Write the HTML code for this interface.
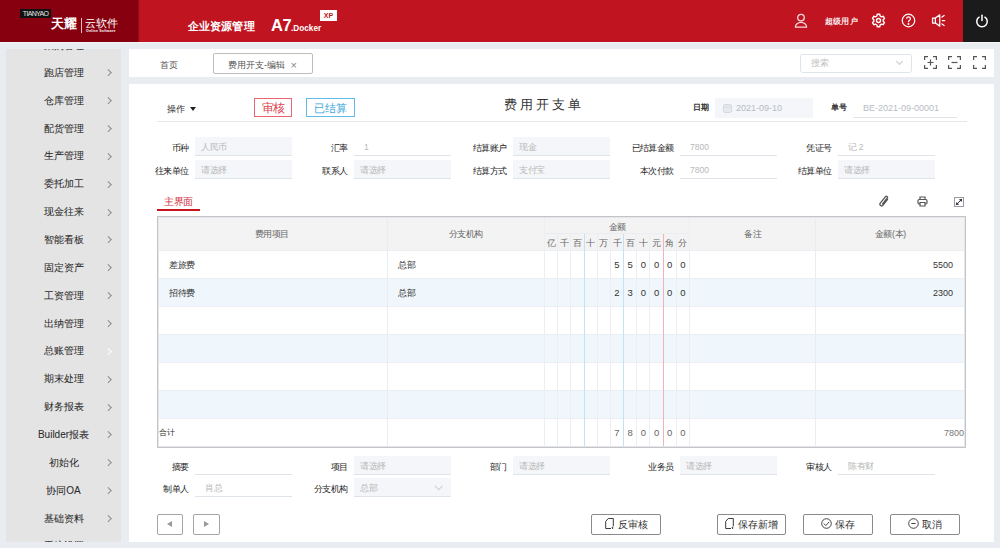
<!DOCTYPE html>
<html><head><meta charset="utf-8">
<style>
*{box-sizing:border-box;margin:0;padding:0}
html,body{width:1000px;height:548px;overflow:hidden;background:#e9edf1;font-family:"Liberation Sans",sans-serif;color:#333}
.a{position:absolute}
#hdr{left:0;top:0;width:1000px;height:42px;background:#c01420}
#logo{left:0;top:0;width:138px;height:42px;background:#870010;box-shadow:1px 0 1px rgba(80,0,0,.35)}
#pwr{left:963px;top:0;width:37px;height:42px;background:#1b1b1b}
#side{left:6px;top:49px;width:115px;height:493px;background:#e4e4e4;overflow:hidden}
.mi{position:absolute;left:0;width:115px;height:28px;font-size:10px;line-height:28px;color:#2a2a2a;-webkit-text-stroke:0.05px #2a2a2a}
.mi .t{position:absolute;left:27.5px;width:60px;text-align:center;white-space:nowrap}
.mi .c{position:absolute;left:100px;top:11.5px;width:4.5px;height:4.5px;border-right:1px solid #999;border-top:1px solid #999;transform:rotate(45deg)}
#tabbar{left:129px;top:49px;width:865px;height:28px;background:#fff}
#main{left:129px;top:84px;width:865px;height:458px;background:#fff}
.lbl{position:absolute;font-size:9px;line-height:22px;height:19px;text-align:right;color:#1e1e1e;white-space:nowrap}
.inp{position:absolute;width:97px;height:19px;font-size:8.5px;line-height:20px;padding-left:6px;color:#b8b8b8;border-bottom:1px solid #dfe3ea;white-space:nowrap}
.inp{padding-left:10px}
.inp.f{background:#f4f6f9;padding-left:6px}
.btn{position:absolute;height:21px;border:1px solid #8a8a8a;border-radius:2px;background:#fff;font-size:10px;line-height:19px;color:#333;text-align:center;white-space:nowrap}
z{display:inline-block;width:1em;text-align:center;font-style:normal}
.ttl z{width:calc(1em + 3.5px);text-align:left}
.lbl z{width:8.4px}
</style></head><body>
<div id="hdr" class="a"></div><div id="logo" class="a"></div><div id="pwr" class="a"></div><div class="a" style="left:0;top:42px;width:1000px;height:1px;background:#f2f8fa"></div>
<div class="a" style="left:20px;top:9px;width:31px;height:9px;background:#111;color:#e8e8e8;font-size:7px;line-height:9px;letter-spacing:-0.7px;text-align:center">TIANYAO</div>
<div class="a" style="left:51px;top:17px;font-size:12.5px;line-height:15px;color:#fff;font-weight:bold;white-space:nowrap"><z>天</z><z>耀</z></div>
<div class="a" style="left:81px;top:18px;width:1px;height:15px;background:#e8c0c4"></div>
<div class="a" style="left:85px;top:15.5px;font-size:11px;line-height:14px;color:#fff;white-space:nowrap"><z>云</z><z>软</z><z>件</z></div>
<div class="a" style="left:86px;top:30px;width:32px;font-size:3.5px;line-height:3px;color:#fff;white-space:nowrap;font-weight:bold;letter-spacing:0.2px">Online Software</div>
<div class="a" style="left:187.5px;top:18.5px;font-size:11.2px;line-height:14px;color:#fff;font-weight:bold;white-space:nowrap"><z>企</z><z>业</z><z>资</z><z>源</z><z>管</z><z>理</z></div>
<div class="a" style="left:271px;top:16px;font-size:16.5px;line-height:18px;color:#fff;font-weight:bold;white-space:nowrap;letter-spacing:-0.5px">A7<span style="font-size:8.2px;letter-spacing:0">.Docker</span></div>
<div class="a" style="left:320px;top:10px;width:17px;height:11px;background:#fff;color:#c01420;font-size:7px;line-height:11px;font-weight:bold;text-align:center">XP</div>
<svg class="a" style="left:793px;top:13px" width="16" height="16" viewBox="0 0 16 16" fill="none" stroke="#f6dadc" stroke-width="1.3"><circle cx="8" cy="4.6" r="3.3"/><path d="M2.4 14.2a5.6 4.9 0 0 1 11.2 0z" stroke-linejoin="round"/></svg>
<div class="a" style="left:825px;top:16.3px;font-size:8.2px;line-height:12px;color:#fff;-webkit-text-stroke:0.2px #fff;white-space:nowrap"><z>超</z><z>级</z><z>用</z><z>户</z></div>
<svg class="a" style="left:871px;top:12.5px" width="15" height="15" viewBox="0 0 24 24" fill="none" stroke="#fff" stroke-width="2.2" stroke-linejoin="round"><path d="M10 2h4l.6 2.8 2.3 1.3 2.7-.9 2 3.5-2.1 1.9v2.7l2.1 1.9-2 3.5-2.7-.9-2.300 1.3L14 22h-4l-.6-2.8-2.3-1.3-2.7.9-2-3.5 2.1-1.9v-2.7L2.4 8.7l2-3.5 2.7.9 2.3-1.3z"/><circle cx="12" cy="12" r="3.2"/></svg>
<svg class="a" style="left:901px;top:12.5px" width="15" height="15" viewBox="0 0 24 24" fill="none" stroke="#fff" stroke-width="2"><circle cx="12" cy="12" r="10"/><path d="M9 9.2a3 3 0 1 1 4.2 2.8c-.8.4-1.2 1-1.2 1.9v1"/><circle cx="12" cy="17.6" r="0.6" fill="#fff"/></svg>
<svg class="a" style="left:931px;top:12.5px" width="15" height="15" viewBox="0 0 24 24" fill="none" stroke="#fff" stroke-width="2" stroke-linejoin="round" stroke-linecap="round"><path d="M2.5 8h4.5l7-5v18l-7-5H2.5z"/><path d="M7 8v8"/><path d="M17.5 6.5l3.5-2.5M18 12h4M17.5 17.5l3.5 2.5"/></svg>
<svg class="a" style="left:975px;top:13.5px" width="14" height="14" viewBox="0 0 24 24" fill="none" stroke="#fff" stroke-width="2.6" stroke-linecap="round"><path d="M7 5.5a9 9 0 1 0 10 0"/><path d="M12 2v9"/></svg>
<div id="side" class="a"><div class="mi" style="top:-16.56px"><span class="t"><z>采</z><z>购</z><z>管</z><z>理</z></span></div><div class="mi" style="top:9.80px"><span class="t"><z>跑</z><z>店</z><z>管</z><z>理</z></span><span class="c" style="border-color:#8a8a8a"></span></div><div class="mi" style="top:37.66px"><span class="t"><z>仓</z><z>库</z><z>管</z><z>理</z></span><span class="c" style="border-color:#8a8a8a"></span></div><div class="mi" style="top:65.52px"><span class="t"><z>配</z><z>货</z><z>管</z><z>理</z></span><span class="c" style="border-color:#8a8a8a"></span></div><div class="mi" style="top:93.38px"><span class="t"><z>生</z><z>产</z><z>管</z><z>理</z></span><span class="c" style="border-color:#8a8a8a"></span></div><div class="mi" style="top:121.24px"><span class="t"><z>委</z><z>托</z><z>加</z><z>工</z></span><span class="c" style="border-color:#8a8a8a"></span></div><div class="mi" style="top:149.10px"><span class="t"><z>现</z><z>金</z><z>往</z><z>来</z></span><span class="c" style="border-color:#8a8a8a"></span></div><div class="mi" style="top:176.96px"><span class="t"><z>智</z><z>能</z><z>看</z><z>板</z></span><span class="c" style="border-color:#8a8a8a"></span></div><div class="mi" style="top:204.82px"><span class="t"><z>固</z><z>定</z><z>资</z><z>产</z></span><span class="c" style="border-color:#8a8a8a"></span></div><div class="mi" style="top:232.68px"><span class="t"><z>工</z><z>资</z><z>管</z><z>理</z></span><span class="c" style="border-color:#8a8a8a"></span></div><div class="mi" style="top:260.54px"><span class="t"><z>出</z><z>纳</z><z>管</z><z>理</z></span><span class="c" style="border-color:#8a8a8a"></span></div><div class="mi" style="top:288.40px"><span class="t"><z>总</z><z>账</z><z>管</z><z>理</z></span><span class="c" style="border-color:#fff"></span></div><div class="mi" style="top:316.26px"><span class="t"><z>期</z><z>末</z><z>处</z><z>理</z></span><span class="c" style="border-color:#8a8a8a"></span></div><div class="mi" style="top:344.12px"><span class="t"><z>财</z><z>务</z><z>报</z><z>表</z></span><span class="c" style="border-color:#8a8a8a"></span></div><div class="mi" style="top:371.98px"><span class="t">Builder<z>报</z><z>表</z></span><span class="c" style="border-color:#8a8a8a"></span></div><div class="mi" style="top:399.84px"><span class="t"><z>初</z><z>始</z><z>化</z></span><span class="c" style="border-color:#8a8a8a"></span></div><div class="mi" style="top:427.70px"><span class="t"><z>协</z><z>同</z>OA</span><span class="c" style="border-color:#8a8a8a"></span></div><div class="mi" style="top:455.56px"><span class="t"><z>基</z><z>础</z><z>资</z><z>料</z></span><span class="c" style="border-color:#8a8a8a"></span></div><div class="mi" style="top:483.42px"><span class="t"><z>系</z><z>统</z><z>设</z><z>置</z></span><span class="c" style="border-color:#8a8a8a"></span></div></div>
<div id="tabbar" class="a"></div>
<div class="a" style="left:160px;top:57.5px;font-size:9px;line-height:14px;color:#555;white-space:nowrap"><z>首</z><z>页</z></div>
<div class="a" style="left:213px;top:53px;width:100px;height:21px;border:1px solid #bdbdbd;border-radius:2px"></div>
<div class="a" style="left:228px;top:57.5px;font-size:9px;line-height:14px;color:#555;white-space:nowrap"><z>费</z><z>用</z><z>开</z><z>支</z>-<z>编</z><z>辑</z></div>
<div class="a" style="left:290.5px;top:57.5px;font-size:11px;line-height:14px;color:#888;white-space:nowrap">×</div>
<div class="a" style="left:800px;top:54px;width:112px;height:19px;border:1px solid #dfe3ea;border-radius:3px"></div>
<div class="a" style="left:811px;top:57px;font-size:9px;line-height:13px;color:#c0c0c0;white-space:nowrap"><z>搜</z><z>索</z></div>
<div class="a" style="left:897px;top:59px;width:5px;height:5px;border-right:1px solid #c8c8c8;border-bottom:1px solid #c8c8c8;transform:rotate(45deg)"></div>
<svg class="a" style="left:923.5px;top:56px" width="13" height="13" viewBox="0 0 13 13" fill="none" stroke="#555" stroke-width="1.2"><path d="M.6 4V.6H4M9 .6h3.4V4M12.4 9v3.4H9M4 12.4H.6V9"/><path d="M6.5 3.5v6M3.5 6.5h6"/></svg>
<svg class="a" style="left:948px;top:56px" width="13" height="13" viewBox="0 0 13 13" fill="none" stroke="#555" stroke-width="1.2"><path d="M.6 4V.6H4M9 .6h3.4V4M12.4 9v3.4H9M4 12.4H.6V9"/><path d="M3.5 6.5h6"/></svg>
<svg class="a" style="left:972.5px;top:56px" width="13" height="13" viewBox="0 0 13 13" fill="none" stroke="#555" stroke-width="1.2"><path d="M.6 4V.6H4M9 .6h3.4V4M12.4 9v3.4H9M4 12.4H.6V9"/></svg>
<div id="main" class="a"></div>
<div class="a" style="left:167px;top:101.5px;font-size:8.5px;line-height:14px;color:#333;white-space:nowrap"><z>操</z><z>作</z></div>
<div class="a" style="left:190px;top:107px;width:0;height:0;border-left:3.5px solid transparent;border-right:3.5px solid transparent;border-top:4px solid #222"></div>
<div class="a" style="left:254px;top:98px;width:38px;height:19px;border:1px solid #e8646e;color:#e0404c;font-size:11.5px;line-height:19px;text-align:center;white-space:nowrap"><z>审</z><z>核</z></div>
<div class="a" style="left:306px;top:98px;width:49px;height:19px;border:1px solid #60bce6;color:#40a8dc;font-size:11px;line-height:19px;text-align:center;white-space:nowrap"><z>已</z><z>结</z><z>算</z></div>
<div class="a ttl" style="left:504px;top:96px;font-size:12.5px;line-height:18px;color:#333;letter-spacing:3px;white-space:nowrap"><z>费</z><z>用</z><z>开</z><z>支</z><z>单</z></div>
<div class="a" style="left:693px;top:101px;font-size:8px;line-height:14px;color:#222;-webkit-text-stroke:0.25px #222;white-space:nowrap"><z>日</z><z>期</z></div>
<div class="a" style="left:715px;top:98px;width:98px;height:20px;background:#f4f6f9"></div>
<svg class="a" style="left:722.5px;top:103.5px" width="9" height="9" viewBox="0 0 9 9"><rect x=".5" y=".5" width="8" height="8" rx="1.6" fill="#e6e9ee" stroke="#d6dae0" stroke-width="1"/><path d="M1 3h7" stroke="#d6dae0" stroke-width=".8"/></svg>
<div class="a" style="left:736px;top:101px;font-size:9px;line-height:14px;color:#b8bcc4;white-space:nowrap">2021-09-10</div>
<div class="a" style="left:831px;top:101px;font-size:8px;line-height:14px;color:#222;-webkit-text-stroke:0.25px #222;white-space:nowrap"><z>单</z><z>号</z></div>
<div class="a" style="left:853px;top:98px;width:104px;height:20px;border-bottom:1px solid #dfe3ea"></div>
<div class="a" style="left:863px;top:101px;font-size:9px;line-height:14px;color:#b8bcc4;white-space:nowrap">BE-2021-09-00001</div>
<div class="a" style="left:157px;top:121px;width:810px;height:1px;background:#e4e6ea"></div>
<div class="lbl" style="left:128.5px;top:137px;width:60px"><z>币</z><z>种</z></div><div class="inp f" style="left:195px;top:137px"><z>人</z><z>民</z><z>币</z></div>
<div class="lbl" style="left:287.5px;top:137px;width:60px"><z>汇</z><z>率</z></div><div class="inp" style="left:354px;top:137px">1</div>
<div class="lbl" style="left:446.5px;top:137px;width:60px"><z>结</z><z>算</z><z>账</z><z>户</z></div><div class="inp f" style="left:513px;top:137px"><z>现</z><z>金</z></div>
<div class="lbl" style="left:613.5px;top:137px;width:60px"><z>已</z><z>结</z><z>算</z><z>金</z><z>额</z></div><div class="inp" style="left:680px;top:137px">7800</div>
<div class="lbl" style="left:771.5px;top:137px;width:60px"><z>凭</z><z>证</z><z>号</z></div><div class="inp" style="left:838px;top:137px"><z>记</z> 2</div>
<div class="lbl" style="left:128.5px;top:159.5px;width:60px"><z>往</z><z>来</z><z>单</z><z>位</z></div><div class="inp f" style="left:195px;top:159.5px"><z>请</z><z>选</z><z>择</z></div>
<div class="lbl" style="left:287.5px;top:159.5px;width:60px"><z>联</z><z>系</z><z>人</z></div><div class="inp f" style="left:354px;top:159.5px"><z>请</z><z>选</z><z>择</z></div>
<div class="lbl" style="left:446.5px;top:159.5px;width:60px"><z>结</z><z>算</z><z>方</z><z>式</z></div><div class="inp f" style="left:513px;top:159.5px"><z>支</z><z>付</z><z>宝</z></div>
<div class="lbl" style="left:613.5px;top:159.5px;width:60px"><z>本</z><z>次</z><z>付</z><z>款</z></div><div class="inp" style="left:680px;top:159.5px">7800</div>
<div class="lbl" style="left:771.5px;top:159.5px;width:60px"><z>结</z><z>算</z><z>单</z><z>位</z></div><div class="inp f" style="left:838px;top:159.5px"><z>请</z><z>选</z><z>择</z></div>
<div class="a" style="left:164px;top:194.5px;font-size:9.5px;line-height:14px;color:#d0303c;white-space:nowrap"><z>主</z><z>界</z><z>面</z></div>
<div class="a" style="left:157px;top:209px;width:43px;height:2px;background:#c8141f"></div>
<svg class="a" style="left:878px;top:195px" width="12" height="12" viewBox="0 0 12 12" fill="none" stroke="#555" stroke-width="1.3" stroke-linecap="round"><path d="M9.6 4.4L5 10.2a1.7 1.7 0 0 1-2.7-2.1L7.5 1.6a1.1 1.1 0 0 1 1.8 1.4L4.6 8.9"/></svg>
<svg class="a" style="left:917px;top:195.5px" width="11" height="11" viewBox="0 0 11 11" fill="none" stroke="#555" stroke-width="1.2"><path d="M3 3.5V1h5v2.5"/><rect x="1" y="3.5" width="9" height="4.5" rx="1.2"/><path d="M3 6.5h5V10H3z" fill="#fff"/></svg>
<svg class="a" style="left:953.5px;top:196.5px" width="10" height="10" viewBox="0 0 10 10" fill="none" stroke="#666" stroke-width="1"><rect x=".5" y=".5" width="9" height="9" stroke="#9a9aa6"/><path d="M2.3 7.7L7.7 2.3" stroke="#333"/><path d="M8.2 1.8L4.9 2.4 7.6 5.1z M1.8 8.2L2.4 4.9 5.1 7.6z" fill="#333" stroke="none"/></svg><div class="a" style="left:158px;top:217px;width:807px;height:33px;background:#f3f3f3"></div>
<div class="a" style="left:158px;top:250px;width:807px;height:1px;background:#ebeef2"></div>
<div class="a" style="left:158px;top:278px;width:807px;height:28px;background:#eff7fc"></div>
<div class="a" style="left:158px;top:278px;width:807px;height:1px;background:#ebeef2"></div>
<div class="a" style="left:158px;top:306px;width:807px;height:1px;background:#ebeef2"></div>
<div class="a" style="left:158px;top:334px;width:807px;height:28px;background:#eff7fc"></div>
<div class="a" style="left:158px;top:334px;width:807px;height:1px;background:#ebeef2"></div>
<div class="a" style="left:158px;top:362px;width:807px;height:1px;background:#ebeef2"></div>
<div class="a" style="left:158px;top:390px;width:807px;height:28px;background:#eff7fc"></div>
<div class="a" style="left:158px;top:390px;width:807px;height:1px;background:#ebeef2"></div>
<div class="a" style="left:158px;top:418px;width:807px;height:1px;background:#ebeef2"></div>
<div class="a" style="left:387px;top:217px;width:1px;height:230px;background:#e9ecf1"></div>
<div class="a" style="left:815px;top:217px;width:1px;height:230px;background:#e9ecf1"></div>
<div class="a" style="left:544px;top:217px;width:1px;height:230px;background:#eceef4"></div>
<div class="a" style="left:557px;top:233px;width:1px;height:214px;background:#eceef4"></div>
<div class="a" style="left:570px;top:233px;width:1px;height:214px;background:#eceef4"></div>
<div class="a" style="left:584px;top:233px;width:1px;height:214px;background:#c2e2f6"></div>
<div class="a" style="left:597px;top:233px;width:1px;height:214px;background:#eceef4"></div>
<div class="a" style="left:610px;top:233px;width:1px;height:214px;background:#eceef4"></div>
<div class="a" style="left:623px;top:233px;width:1px;height:214px;background:#c2e2f6"></div>
<div class="a" style="left:636px;top:233px;width:1px;height:214px;background:#eceef4"></div>
<div class="a" style="left:649px;top:233px;width:1px;height:214px;background:#eceef4"></div>
<div class="a" style="left:663px;top:233px;width:1px;height:214px;background:#f2b2ba"></div>
<div class="a" style="left:676px;top:233px;width:1px;height:214px;background:#eceef4"></div>
<div class="a" style="left:689px;top:217px;width:1px;height:230px;background:#eceef4"></div>
<div class="a" style="left:544px;top:233px;width:145px;height:1px;background:#e9ecf1"></div>
<div class="a" style="left:211.75px;top:228px;width:120px;text-align:center;font-size:8.5px;line-height:12px;color:#666;white-space:nowrap"><z>费</z><z>用</z><z>项</z><z>目</z></div>
<div class="a" style="left:405.5px;top:228px;width:120px;text-align:center;font-size:8.5px;line-height:12px;color:#666;white-space:nowrap"><z>分</z><z>支</z><z>机</z><z>构</z></div>
<div class="a" style="left:557px;top:220.5px;width:120px;text-align:center;font-size:8.5px;line-height:12px;color:#666;white-space:nowrap"><z>金</z><z>额</z></div>
<div class="a" style="left:692.5px;top:228px;width:120px;text-align:center;font-size:8.5px;line-height:12px;color:#666;white-space:nowrap"><z>备</z><z>注</z></div>
<div class="a" style="left:830.5px;top:228px;width:120px;text-align:center;font-size:8.5px;line-height:12px;color:#666;white-space:nowrap"><z>金</z><z>额</z>(<z>本</z>)</div>
<div class="a" style="left:491.0909090909091px;top:237px;width:120px;text-align:center;font-size:9px;line-height:12px;color:#666;white-space:nowrap"><z>亿</z></div>
<div class="a" style="left:504.27272727272725px;top:237px;width:120px;text-align:center;font-size:9px;line-height:12px;color:#666;white-space:nowrap"><z>千</z></div>
<div class="a" style="left:517.4545454545455px;top:237px;width:120px;text-align:center;font-size:9px;line-height:12px;color:#666;white-space:nowrap"><z>百</z></div>
<div class="a" style="left:530.6363636363636px;top:237px;width:120px;text-align:center;font-size:9px;line-height:12px;color:#666;white-space:nowrap"><z>十</z></div>
<div class="a" style="left:543.8181818181819px;top:237px;width:120px;text-align:center;font-size:9px;line-height:12px;color:#666;white-space:nowrap"><z>万</z></div>
<div class="a" style="left:557.0px;top:237px;width:120px;text-align:center;font-size:9px;line-height:12px;color:#666;white-space:nowrap"><z>千</z></div>
<div class="a" style="left:570.1818181818182px;top:237px;width:120px;text-align:center;font-size:9px;line-height:12px;color:#666;white-space:nowrap"><z>百</z></div>
<div class="a" style="left:583.3636363636364px;top:237px;width:120px;text-align:center;font-size:9px;line-height:12px;color:#666;white-space:nowrap"><z>十</z></div>
<div class="a" style="left:596.5454545454545px;top:237px;width:120px;text-align:center;font-size:9px;line-height:12px;color:#666;white-space:nowrap"><z>元</z></div>
<div class="a" style="left:609.7272727272727px;top:237px;width:120px;text-align:center;font-size:9px;line-height:12px;color:#666;white-space:nowrap"><z>角</z></div>
<div class="a" style="left:622.9090909090909px;top:237px;width:120px;text-align:center;font-size:9px;line-height:12px;color:#666;white-space:nowrap"><z>分</z></div>
<div class="a" style="left:169px;top:259px;font-size:8.5px;line-height:12px;color:#333;white-space:nowrap"><z>差</z><z>旅</z><z>费</z></div><div class="a" style="left:398px;top:259px;font-size:8.5px;line-height:12px;color:#333;white-space:nowrap"><z>总</z><z>部</z></div><div class="a" style="left:557.0px;top:259px;width:120px;text-align:center;font-size:9.5px;line-height:12px;color:#333;white-space:nowrap">5</div><div class="a" style="left:570.1818181818182px;top:259px;width:120px;text-align:center;font-size:9.5px;line-height:12px;color:#333;white-space:nowrap">5</div><div class="a" style="left:583.3636363636364px;top:259px;width:120px;text-align:center;font-size:9.5px;line-height:12px;color:#333;white-space:nowrap">0</div><div class="a" style="left:596.5454545454545px;top:259px;width:120px;text-align:center;font-size:9.5px;line-height:12px;color:#333;white-space:nowrap">0</div><div class="a" style="left:609.7272727272727px;top:259px;width:120px;text-align:center;font-size:9.5px;line-height:12px;color:#333;white-space:nowrap">0</div><div class="a" style="left:622.9090909090909px;top:259px;width:120px;text-align:center;font-size:9.5px;line-height:12px;color:#333;white-space:nowrap">0</div><div class="a" style="left:873px;top:259px;width:80px;text-align:right;font-size:9px;line-height:12px;color:#333;white-space:nowrap">5500</div>
<div class="a" style="left:169px;top:287px;font-size:8.5px;line-height:12px;color:#333;white-space:nowrap"><z>招</z><z>待</z><z>费</z></div><div class="a" style="left:398px;top:287px;font-size:8.5px;line-height:12px;color:#333;white-space:nowrap"><z>总</z><z>部</z></div><div class="a" style="left:557.0px;top:287px;width:120px;text-align:center;font-size:9.5px;line-height:12px;color:#333;white-space:nowrap">2</div><div class="a" style="left:570.1818181818182px;top:287px;width:120px;text-align:center;font-size:9.5px;line-height:12px;color:#333;white-space:nowrap">3</div><div class="a" style="left:583.3636363636364px;top:287px;width:120px;text-align:center;font-size:9.5px;line-height:12px;color:#333;white-space:nowrap">0</div><div class="a" style="left:596.5454545454545px;top:287px;width:120px;text-align:center;font-size:9.5px;line-height:12px;color:#333;white-space:nowrap">0</div><div class="a" style="left:609.7272727272727px;top:287px;width:120px;text-align:center;font-size:9.5px;line-height:12px;color:#333;white-space:nowrap">0</div><div class="a" style="left:622.9090909090909px;top:287px;width:120px;text-align:center;font-size:9.5px;line-height:12px;color:#333;white-space:nowrap">0</div><div class="a" style="left:873px;top:287px;width:80px;text-align:right;font-size:9px;line-height:12px;color:#333;white-space:nowrap">2300</div>
<div class="a" style="left:159px;top:427px;font-size:8px;line-height:12px;color:#333;white-space:nowrap"><z>合</z><z>计</z></div>
<div class="a" style="left:557.0px;top:427px;width:120px;text-align:center;font-size:9.5px;line-height:12px;color:#666;white-space:nowrap">7</div><div class="a" style="left:570.1818181818182px;top:427px;width:120px;text-align:center;font-size:9.5px;line-height:12px;color:#666;white-space:nowrap">8</div><div class="a" style="left:583.3636363636364px;top:427px;width:120px;text-align:center;font-size:9.5px;line-height:12px;color:#666;white-space:nowrap">0</div><div class="a" style="left:596.5454545454545px;top:427px;width:120px;text-align:center;font-size:9.5px;line-height:12px;color:#666;white-space:nowrap">0</div><div class="a" style="left:609.7272727272727px;top:427px;width:120px;text-align:center;font-size:9.5px;line-height:12px;color:#666;white-space:nowrap">0</div><div class="a" style="left:622.9090909090909px;top:427px;width:120px;text-align:center;font-size:9.5px;line-height:12px;color:#666;white-space:nowrap">0</div><div class="a" style="left:884px;top:427px;width:80px;text-align:right;font-size:9px;line-height:12px;color:#333;white-space:nowrap"><span style="color:#777">7800</span></div>
<div class="a" style="left:157px;top:216px;width:809px;height:232px;border:1px solid #c4c4c4;box-shadow:inset 1px 1px 0 #e4e7ee,inset -1px -1px 0 #e4e7ee"></div><div class="lbl" style="left:128.5px;top:456px;width:60px"><z>摘</z><z>要</z></div><div class="inp" style="left:195px;top:456px"></div>
<div class="lbl" style="left:287.5px;top:456px;width:60px"><z>项</z><z>目</z></div><div class="inp f" style="left:354px;top:456px"><z>请</z><z>选</z><z>择</z></div>
<div class="lbl" style="left:446.5px;top:456px;width:60px"><z>部</z><z>门</z></div><div class="inp f" style="left:513px;top:456px"><z>请</z><z>选</z><z>择</z></div>
<div class="lbl" style="left:613.5px;top:456px;width:60px"><z>业</z><z>务</z><z>员</z></div><div class="inp f" style="left:680px;top:456px"><z>请</z><z>选</z><z>择</z></div>
<div class="lbl" style="left:771.5px;top:456px;width:60px"><z>审</z><z>核</z><z>人</z></div><div class="inp" style="left:838px;top:456px"><z>陈</z><z>有</z><z>财</z></div>
<div class="lbl" style="left:128.5px;top:478px;width:60px"><z>制</z><z>单</z><z>人</z></div><div class="inp" style="left:195px;top:478px"><z>肖</z><z>总</z></div>
<div class="lbl" style="left:287.5px;top:478px;width:60px"><z>分</z><z>支</z><z>机</z><z>构</z></div><div class="inp f" style="left:354px;top:478px"><z>总</z><z>部</z></div><div class="a" style="left:436px;top:482.5px;width:5.5px;height:5.5px;border-right:1px solid #c8c8c8;border-bottom:1px solid #c8c8c8;transform:rotate(45deg)"></div>
<div class="btn" style="left:156.5px;top:514px;width:26.5px;border-color:#a4a4a4"><span style="display:inline-block;width:0;height:0;border-top:3px solid transparent;border-bottom:3px solid transparent;border-right:5px solid #999;vertical-align:middle;margin-top:-2px"></span></div>
<div class="btn" style="left:193px;top:514px;width:27px;border-color:#a4a4a4"><span style="display:inline-block;width:0;height:0;border-top:3px solid transparent;border-bottom:3px solid transparent;border-left:5px solid #999;vertical-align:middle;margin-top:-2px"></span></div>
<div class="btn" style="left:591px;top:514px;width:70px"><svg width="9" height="11" viewBox="0 0 9 11" fill="none" stroke="#3a3a3a" stroke-width="1" style="vertical-align:middle;margin:-3px 4px 0 0"><path d="M3.3 .5H8.3V8.2M6 10.5H.7V3.3L3.3 .5"/><path d="M7.6 8.6v1.9M6.7 9.7l.9.9.9-.9" stroke-width=".9"/></svg><z>反</z><z>审</z><z>核</z></div>
<div class="btn" style="left:716.5px;top:514px;width:69.5px"><svg width="9" height="11" viewBox="0 0 9 11" fill="none" stroke="#3a3a3a" stroke-width="1" style="vertical-align:middle;margin:-3px 4px 0 0"><path d="M3.3 .5H8.3V8.2M6 10.5H.7V3.3L3.3 .5"/><path d="M7.6 8.6v1.9M6.7 9.7l.9.9.9-.9" stroke-width=".9"/></svg><z>保</z><z>存</z><z>新</z><z>增</z></div>
<div class="btn" style="left:803px;top:514px;width:69.5px"><svg width="11" height="11" viewBox="0 0 11 11" fill="none" stroke="#444" stroke-width="1" style="vertical-align:middle;margin:-3px 3px 0 0"><circle cx="5.5" cy="5.5" r="4.8"/><path d="M2.9 5.6l1.9 1.9 3.4-3.6"/></svg><z>保</z><z>存</z></div>
<div class="btn" style="left:890px;top:514px;width:70px"><svg width="11" height="11" viewBox="0 0 11 11" fill="none" stroke="#444" stroke-width="1" style="vertical-align:middle;margin:-3px 3px 0 0"><circle cx="5.5" cy="5.5" r="4.8"/><path d="M3.3 5.5h4.4"/></svg><z>取</z><z>消</z></div></body></html>
